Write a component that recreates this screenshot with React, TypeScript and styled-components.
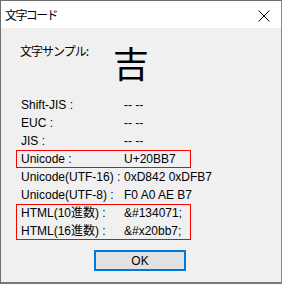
import React from 'react';
import styled, { createGlobalStyle } from 'styled-components';

const GlobalStyle = createGlobalStyle`
  html, body {
    margin: 0;
    padding: 0;
    background: #ffffff;
  }
`;

const Window = styled.div`
  width: 282px;
  height: 284px;
  box-sizing: border-box;
  border: 1px solid #6f6f6f;
  border-right-color: #8a8a8a;
  border-bottom: 2px solid #7a7a7a;
  display: flex;
  flex-direction: column;
  font-family: 'Liberation Sans', 'Noto Sans CJK JP', sans-serif;
  color: #000;
`;

const TitleBar = styled.div`
  height: 27px;
  flex: none;
  background: #ffffff;
  display: flex;
  justify-content: space-between;
  align-items: flex-start;
  padding: 0 11px 0 4px;
`;

const Title = styled.span`
  font-family: 'Noto Sans CJK JP', sans-serif;
  font-size: 12px;
  line-height: 14px;
  margin-top: 7px;
  letter-spacing: -1.6px;
`;

const CloseIcon = styled.svg`
  margin-top: 9px;
  width: 12px;
  height: 12px;
`;

const Body = styled.div`
  flex: 1;
  background: #f0f0f0;
  padding: 14px 0 0 15px;
  display: flex;
  flex-direction: column;
`;

const SampleRow = styled.div`
  height: 54px;
  display: flex;
  align-items: flex-start;
  padding-left: 4px;
`;

const SampleLabel = styled.span`
  font-family: 'Noto Sans CJK JP', sans-serif;
  font-size: 12px;
  line-height: 18px;
  letter-spacing: -1px;
  width: 93px;
`;

const SampleChar = styled.span`
  font-family: 'Noto Sans CJK JP', sans-serif;
  font-size: 36px;
  line-height: 36px;
  margin-top: 2px;
`;

const Rows = styled.div`
  display: flex;
  flex-direction: column;
`;

const Group = styled.div`
  width: 175px;
  box-shadow: inset 0 0 0 1px #ff0000;
`;

const Row = styled.div`
  display: grid;
  grid-template-columns: 103px auto;
  height: 18px;
  line-height: 18px;
  font-size: 12px;
  padding-left: 5px;
  white-space: nowrap;
`;

const Footer = styled.div`
  margin-top: 10px;
  padding-left: 78px;
`;

const OkButton = styled.button`
  width: 92px;
  height: 21px;
  box-sizing: border-box;
  border: 2px solid #0078d7;
  background: #e1e1e1;
  font-family: 'Liberation Sans', sans-serif;
  font-size: 12px;
  color: #000;
  padding: 0;
`;

type Item = { label: string; value: string };

const plain: Item[] = [
  { label: 'Shift-JIS :', value: '-- --' },
  { label: 'EUC :', value: '-- --' },
  { label: 'JIS :', value: '-- --' },
];

const unicode: Item = { label: 'Unicode :', value: 'U+20BB7' };

const utf: Item[] = [
  { label: 'Unicode(UTF-16) :', value: '0xD842 0xDFB7' },
  { label: 'Unicode(UTF-8) :', value: 'F0 A0 AE B7' },
];

const html: Item[] = [
  { label: 'HTML(10進数) :', value: '&#134071;' },
  { label: 'HTML(16進数) :', value: '&#x20bb7;' },
];

const renderRow = (item: Item) => (
  <Row key={item.label}>
    <span>{item.label}</span>
    <span>{item.value}</span>
  </Row>
);

export default function App() {
  return (
    <>
      <GlobalStyle />
      <Window>
        <TitleBar>
          <Title>文字コード</Title>
          <CloseIcon viewBox="0 0 12 12">
            <path d="M0.5 0.5 L11.5 11.5 M11.5 0.5 L0.5 11.5" stroke="#000" strokeWidth="1" fill="none" />
          </CloseIcon>
        </TitleBar>
        <Body>
          <SampleRow>
            <SampleLabel>文字サンプル:</SampleLabel>
            <SampleChar>吉</SampleChar>
          </SampleRow>
          <Rows>
            {plain.map(renderRow)}
            <Group>{renderRow(unicode)}</Group>
            {utf.map(renderRow)}
            <Group>{html.map(renderRow)}</Group>
          </Rows>
          <Footer>
            <OkButton>OK</OkButton>
          </Footer>
        </Body>
      </Window>
    </>
  );
}
